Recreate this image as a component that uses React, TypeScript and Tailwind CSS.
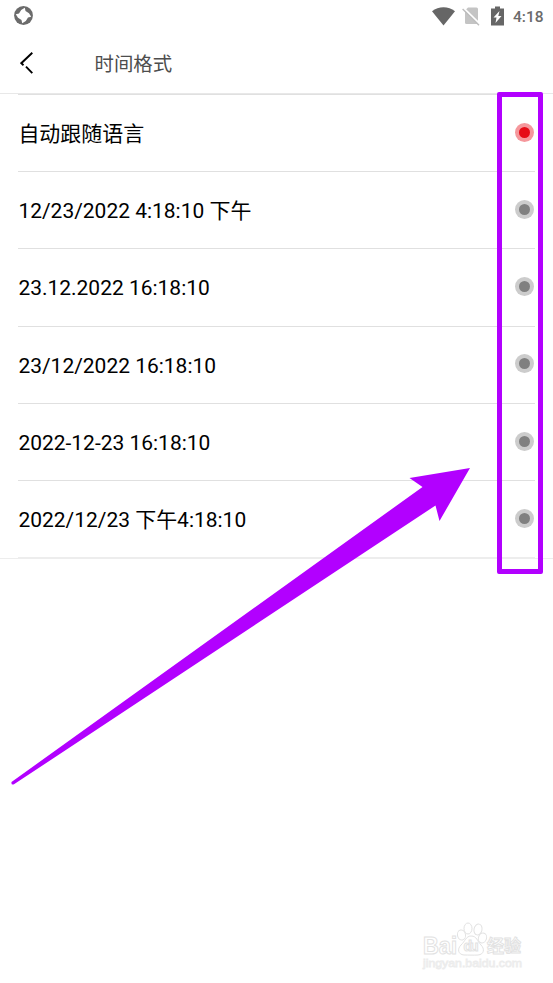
import React, { useState } from "react";

const formats = [
  "自动跟随语言",
  "12/23/2022 4:18:10 下午",
  "23.12.2022 16:18:10",
  "23/12/2022 16:18:10",
  "2022-12-23 16:18:10",
  "2022/12/23 下午4:18:10",
];

const StatusBar = () => {
  return (
    <div className="flex h-8 items-center justify-between pl-[14px] pr-[11px]">
      <svg className="mb-px" width="19" height="19" viewBox="0 0 19 19">
        <circle cx="9.5" cy="9.5" r="9.4" fill="#6b6b6b" />
        <path
          d="M10.800 1.800 11.500 5 15 7.200 17.200 10.800 14 11.500 11.800 15 8.200 17.200 7.500 14 4 11.800 1.800 8.200 5 7.500 7.200 4Z"
          fill="#fff"
        />
      </svg>
      <div className="flex items-center">
        <svg width="23" height="19" viewBox="0 0 23 19">
          <path d="M0 4.300C6.500-1 16.500-1 23 4.300L11.500 18.500Z" fill="#666666" />
        </svg>
        <svg className="ml-[7px]" width="19" height="19" viewBox="0 0 19 19">
          <path d="M6 .5h8.500A1.500 1.500 0 0 1 16 2v15H4.500A1.500 1.500 0 0 1 3 15.500V3.500Z" fill="#c4c4c4" />
          <path d="M1.500.8 18.500 17.500" stroke="#fff" strokeWidth="1.800" />
          <path d="M.6 2 17 18.200" stroke="#bdbdbd" strokeWidth="1.400" />
        </svg>
        <svg className="ml-[10px] mb-px" width="13" height="20" viewBox="0 0 13 20">
          <path d="M0 2.500h4V.5h5v2h4V19.500H0Z" fill="#666666" />
          <path d="M8.500 5 2.500 11.500h3L4.500 17l6-7H7.300Z" fill="#fff" />
        </svg>
        <span className="ml-[9px] mt-px w-[29px] whitespace-nowrap font-['Roboto'] text-[15.500px] font-medium leading-[20px] text-[#6b6b6b]">
          4:18
        </span>
      </div>
    </div>
  );
};

const Header = () => {
  return (
    <div className="flex h-[62px] items-center border-b border-[#e8e8e8] pl-5">
      <svg width="14" height="22" viewBox="0 0 14 22" fill="none" stroke="#000" strokeWidth="1.900">
        <path d="M12.300.8 1.300 11.200 3.500 13.300M6 14.700 12.300 21.200" />
      </svg>
      <h1 className="ml-[60.500px] mt-[4px] font-['Roboto','Noto_Sans_CJK_SC',sans-serif] text-[19.400px] leading-[28px] text-[#4d4d4d]">
        时间格式
      </h1>
    </div>
  );
};

const Watermark = () => {
  return (
    <svg
      className="absolute left-[418px] top-[918px]"
      width="112"
      height="58"
      viewBox="0 0 112 58"
      fill="#fff"
      stroke="#e2e2e2"
      strokeWidth="1"
    >
      <text
        x="5"
        y="35.500"
        fontFamily="Liberation Sans"
        fontSize="23"
        fontWeight="700"
        textLength="34"
        lengthAdjust="spacingAndGlyphs"
      >
        Bai
      </text>
      <ellipse cx="43.500" cy="17" rx="4" ry="5" transform="rotate(-12 43.500 17)" />
      <ellipse cx="50" cy="10.500" rx="4" ry="5.500" />
      <ellipse cx="60" cy="11.500" rx="4" ry="5.500" transform="rotate(12 60 11.500)" />
      <ellipse cx="64.500" cy="20" rx="4" ry="5" transform="rotate(20 64.500 20)" />
      <path d="M53 18c6 0 6 5 10 9 4 4 3 9.500-3 10-4 .3-10 0-14 0-6-.5-7-6-3-10 4-3.500 5-9 10-9Z" />
      <text x="45.500" y="33" fontFamily="Liberation Sans" fontSize="14" fontWeight="700" textLength="15">
        du
      </text>
      <text x="69" y="34" fontFamily="Noto Sans CJK SC" fontSize="17" fontWeight="700" textLength="34">
        经验
      </text>
      <text
        x="5"
        y="49"
        fontFamily="Liberation Sans"
        fontSize="11"
        textLength="99"
        lengthAdjust="spacingAndGlyphs"
        stroke="#ececec"
        strokeWidth=".8"
      >
        jingyan.baidu.com
      </text>
    </svg>
  );
};

// highlight frame and arrow drawn over the list
const Annotation = () => {
  return (
    <>
      <div className="pointer-events-none absolute left-[497px] top-[92px] h-[482px] w-[46px] rounded-[2px] border-[5px] border-[#b200ff]" />
      <svg
        className="pointer-events-none absolute left-0 top-[460px]"
        width="480"
        height="335"
        viewBox="0 460 480 335"
      >
        <path
          d="M11.500 782 422.500 487 409.500 478 470 468 439.500 521 435.500 505.500 14 784.300Q11 785.500 11.500 782Z"
          fill="#b200ff"
        />
      </svg>
    </>
  );
};

const App = () => {
  const [selected, setSelected] = useState(0);

  return (
    <div className="relative h-[983px] w-[553px] overflow-hidden bg-white">
      <StatusBar />
      <Header />
      <div className="border-b border-[#ededed]">
        <ul className="ml-[18px] mr-[18px] border-t border-[#e0e0e0]">
          {formats.map((item, index) => (
            <li
              key={item}
              onClick={() => setSelected(index)}
              className="flex h-[77.200px] cursor-pointer items-center justify-between border-b border-[#e0e0e0] pl-[0.400px] pr-[1px] last:border-[#ededed]"
            >
              <span className="mt-[2px] whitespace-nowrap font-['Roboto','Noto_Sans_CJK_SC',sans-serif] text-[20.980px] leading-[30px] text-black">
                {item}
              </span>
              <span
                className={`mb-[1.600px] flex size-[19px] items-center justify-center rounded-full ${
                  selected === index ? "bg-[#f5979c]" : "bg-[#cccccc]"
                }`}
              >
                <span
                  className={`size-[11px] rounded-full ${
                    selected === index ? "bg-[#e60b17]" : "bg-[#808080]"
                  }`}
                />
              </span>
            </li>
          ))}
        </ul>
      </div>
      <Watermark />
      <Annotation />
    </div>
  );
};

export default App;
